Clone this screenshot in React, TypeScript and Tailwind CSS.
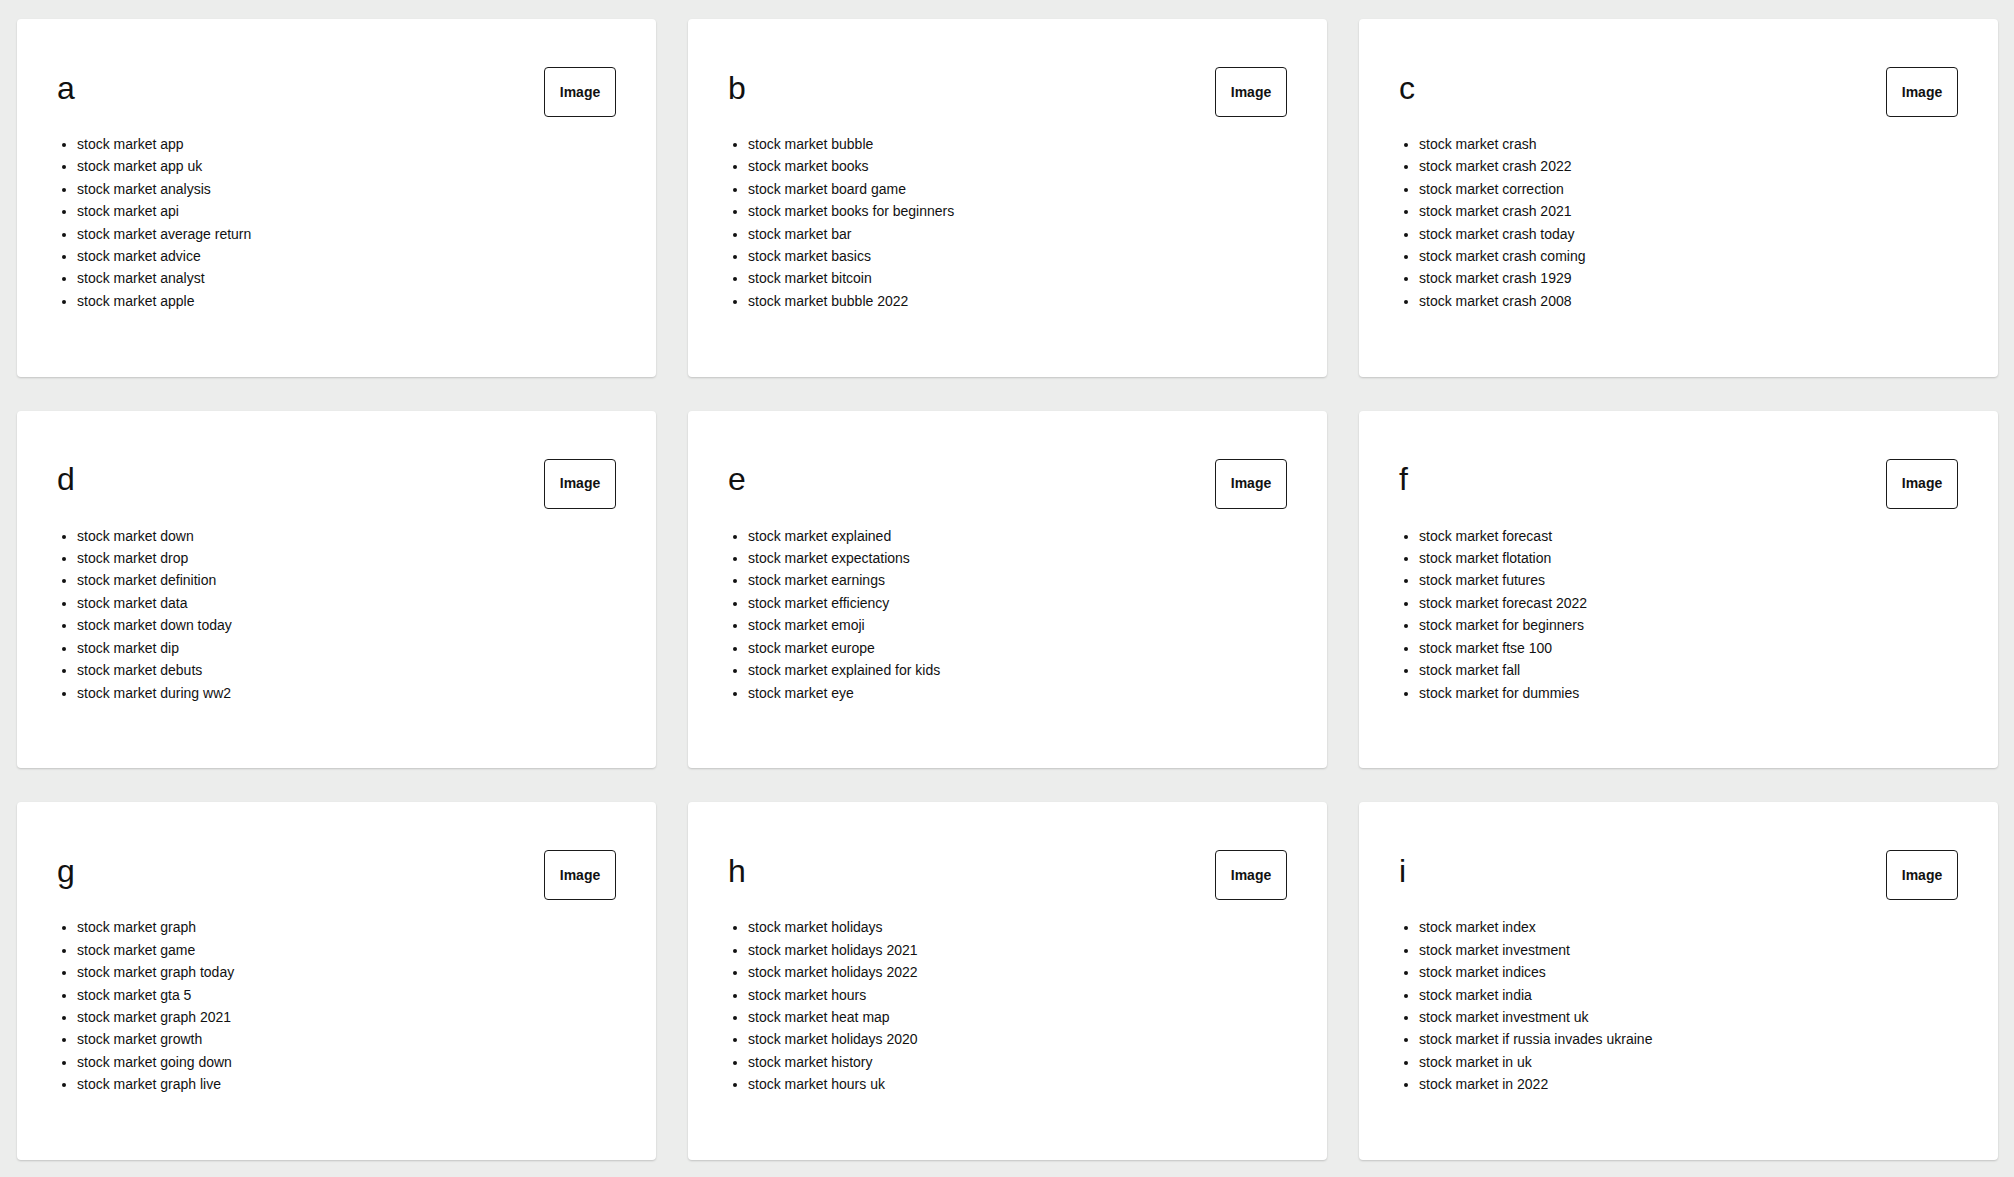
const groups: { letter: string; items: string[] }[] = [
  {
    letter: "a",
    items: [
      "stock market app",
      "stock market app uk",
      "stock market analysis",
      "stock market api",
      "stock market average return",
      "stock market advice",
      "stock market analyst",
      "stock market apple",
    ],
  },
  {
    letter: "b",
    items: [
      "stock market bubble",
      "stock market books",
      "stock market board game",
      "stock market books for beginners",
      "stock market bar",
      "stock market basics",
      "stock market bitcoin",
      "stock market bubble 2022",
    ],
  },
  {
    letter: "c",
    items: [
      "stock market crash",
      "stock market crash 2022",
      "stock market correction",
      "stock market crash 2021",
      "stock market crash today",
      "stock market crash coming",
      "stock market crash 1929",
      "stock market crash 2008",
    ],
  },
  {
    letter: "d",
    items: [
      "stock market down",
      "stock market drop",
      "stock market definition",
      "stock market data",
      "stock market down today",
      "stock market dip",
      "stock market debuts",
      "stock market during ww2",
    ],
  },
  {
    letter: "e",
    items: [
      "stock market explained",
      "stock market expectations",
      "stock market earnings",
      "stock market efficiency",
      "stock market emoji",
      "stock market europe",
      "stock market explained for kids",
      "stock market eye",
    ],
  },
  {
    letter: "f",
    items: [
      "stock market forecast",
      "stock market flotation",
      "stock market futures",
      "stock market forecast 2022",
      "stock market for beginners",
      "stock market ftse 100",
      "stock market fall",
      "stock market for dummies",
    ],
  },
  {
    letter: "g",
    items: [
      "stock market graph",
      "stock market game",
      "stock market graph today",
      "stock market gta 5",
      "stock market graph 2021",
      "stock market growth",
      "stock market going down",
      "stock market graph live",
    ],
  },
  {
    letter: "h",
    items: [
      "stock market holidays",
      "stock market holidays 2021",
      "stock market holidays 2022",
      "stock market hours",
      "stock market heat map",
      "stock market holidays 2020",
      "stock market history",
      "stock market hours uk",
    ],
  },
  {
    letter: "i",
    items: [
      "stock market index",
      "stock market investment",
      "stock market indices",
      "stock market india",
      "stock market investment uk",
      "stock market if russia invades ukraine",
      "stock market in uk",
      "stock market in 2022",
    ],
  },
];

function LetterCard({ letter, items }: { letter: string; items: string[] }) {
  return (
    <div className="bg-white rounded-[4px] shadow-[0_1px_2px_rgba(0,0,0,0.18)] pt-12 px-10">
      <div className="flex items-center justify-between">
        <h2 className="mb-[9px] text-[32px] leading-none text-[#111]">{letter}</h2>
        <button className="h-[50px] w-[72px] rounded-[4px] border border-[#1a1a1a] text-[14px] font-bold text-[#111]">
          Image
        </button>
      </div>
      <ul className="mt-[16px] list-disc pl-5 text-[14px] leading-[22.4px] text-[#111]">
        {items.map((item) => (
          <li key={item}>{item}</li>
        ))}
      </ul>
    </div>
  );
}

export default function App() {
  return (
    <div
      className="h-screen bg-[#ecedec] pt-[19px] pb-[17px] pl-[17px] pr-[16px] grid grid-cols-3 grid-rows-3 gap-x-[32px] gap-y-[34px]"
      style={{ fontFamily: '"Liberation Sans", Arial, sans-serif' }}
    >
      {groups.map((g) => (
        <LetterCard key={g.letter} letter={g.letter} items={g.items} />
      ))}
    </div>
  );
}
